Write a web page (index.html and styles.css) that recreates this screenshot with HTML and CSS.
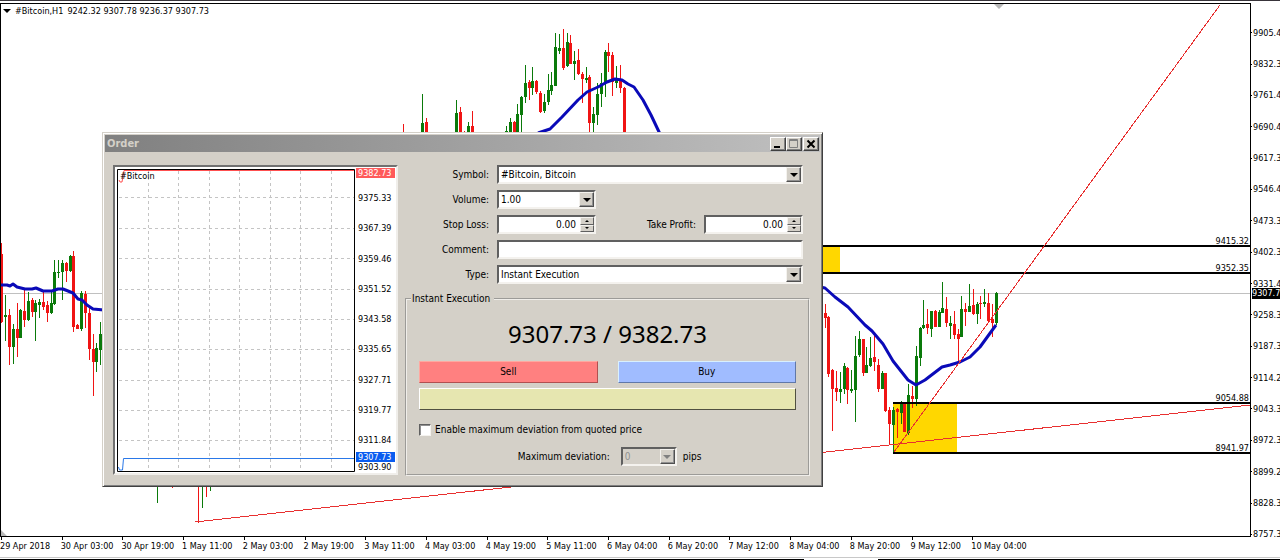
FILE: index.html
```html
<!DOCTYPE html>
<html lang="en">
<head>
  <meta charset="UTF-8">
  <meta name="viewport" content="width=device-width, initial-scale=1.0">
  <title>#Bitcoin,H1</title>
  <link rel="stylesheet" href="styles.css">
</head>
<body>
  <main class="terminal">
    <div class="chart">
      <div class="plot">
        <svg class="plot-svg" viewBox="1 4 1249 532">
          <rect class="zone" x="822" y="246" width="18" height="27"/>
          <rect class="zone" x="893" y="403" width="64" height="50"/>
          <path class="price-line" d="M1 293.5H1250"/>
          <g id="candles"></g>
          <path class="average" d="M1 285L7 285L10 286L13 284L17 287L25 289L32 289L36 288L43 291L52 291L58 289L63 289L68 291L73 293L78 299L82 300L87 305L93 309L104 310"/>
          <path class="average" d="M538 133L550 129L562 117L578 100L587 92L598 87L607 82L615 79L622 80L628 84L634 87L643 100L651 115L660 134"/>
          <path class="average" d="M820 287L825 288L835 297L848 307L865 325L872 331L883 344L893 361L908 380L916 385L925 380L942 367L950 365L960 362L970 357L980 347L996 325"/>
          <path class="level" d="M820 246H1250M820 273H1250M893 403H1250M893 453H1250"/>
          <path class="trend" d="M195 522L1250 405M894 452L1220 5"/>
          <path class="shift-mark" d="M994 4h10l-5 5zM1 530l6 6h-6z"/>
          <g class="level-text">
            <text x="1249" y="244">9415.32</text>
            <text x="1249" y="271">9352.35</text>
            <text x="1249" y="401">9054.88</text>
            <text x="1249" y="451">8941.97</text>
          </g>
        </svg>
        <div class="chart-title"><span class="caret"></span><span>#Bitcoin,H1</span><span>9242.32 9307.78 9236.37 9307.73</span></div>
      </div>
      <div class="price-axis">
        <span>9905.4</span>
        <span>9832.3</span>
        <span>9761.4</span>
        <span>9690.4</span>
        <span>9617.3</span>
        <span>9546.4</span>
        <span>9473.3</span>
        <span>9402.3</span>
        <span>9331.4</span>
        <span>9258.3</span>
        <span>9187.3</span>
        <span>9114.2</span>
        <span>9043.3</span>
        <span>8972.3</span>
        <span>8899.2</span>
        <span>8828.3</span>
        <span>8757.3</span>
        <b class="price-now">9307.7</b>
      </div>
      <div class="time-axis">
        <span>29 Apr 2018</span>
        <span>30 Apr 03:00</span>
        <span>30 Apr 19:00</span>
        <span>1 May 11:00</span>
        <span>2 May 03:00</span>
        <span>2 May 19:00</span>
        <span>3 May 11:00</span>
        <span>4 May 03:00</span>
        <span>4 May 19:00</span>
        <span>5 May 11:00</span>
        <span>6 May 04:00</span>
        <span>6 May 20:00</span>
        <span>7 May 12:00</span>
        <span>8 May 04:00</span>
        <span>8 May 20:00</span>
        <span>9 May 12:00</span>
        <span>10 May 04:00</span>
      </div>
    </div>
    <div class="tab-edge"><span></span></div>

    <form class="window" aria-labelledby="windowTitle">
      <div class="title-bar">
        <span id="windowTitle">Order</span>
        <div class="window-buttons">
          <button type="button" aria-label="Minimize"><svg viewBox="0 0 12 10"><path d="M2 8h6" stroke="#000" stroke-width="2"/></svg></button>
          <button type="button" aria-label="Maximize" disabled><svg viewBox="0 0 12 10"><path d="M1.500 .5h8v8h-8zM1.500 1.500h8" fill="none" stroke="#808080"/></svg></button>
          <button type="button" aria-label="Close" class="close"><svg viewBox="0 0 12 10"><path d="M2.500 1.500l7 7M9.500 1.500l-7 7" stroke="#000" stroke-width="2"/></svg></button>
        </div>
      </div>

      <div class="window-body">
        <div class="tick-chart">
          <svg class="tick-svg" viewBox="0 0 240 305">
            <path class="tick-grid" d="M32.500 3V303M62.500 3V303M93.500 3V303M123.500 3V303M154.500 3V303M184.500 3V303M215.500 3V303"/>
            <path class="tick-grid" d="M3 29.500H239M3 60.500H239M3 90.500H239M3 121.500H239M3 151.500H239M3 181.500H239M3 212.500H239M3 242.500H239M3 272.500H239"/>
            <path class="tick-frame" d="M1.500 1.500H238.500V303.500H1.500z"/>
            <path class="tick-ask" d="M3 12l1 2h2l2-11.500H238"/>
            <path class="tick-bid" d="M2.500 299l1 3h3l1-11.500H238"/>
            <text class="tick-name" x="4" y="11">#Bitcoin</text>
          </svg>
          <div class="tick-scale">
            <span class="tag ask">9382.73</span>
            <div class="tick-labels">
              <span>9375.33</span>
              <span>9367.39</span>
              <span>9359.46</span>
              <span>9351.52</span>
              <span>9343.58</span>
              <span>9335.65</span>
              <span>9327.71</span>
              <span>9319.77</span>
              <span>9311.84</span>
            </div>
            <span class="tag bid">9307.73</span>
            <span class="lowest">9303.90</span>
          </div>
        </div>

        <div class="order">
          <div class="fields">
            <label for="symbol">Symbol:</label>
            <div class="combo wide">
              <select id="symbol"><option>#Bitcoin, Bitcoin</option></select>
              <span class="arrow"></span>
            </div>

            <label for="volume">Volume:</label>
            <div class="combo">
              <select id="volume"><option>1.00</option></select>
              <span class="arrow"></span>
            </div>

            <label for="stopLoss">Stop Loss:</label>
            <div class="spin">
              <input type="text" id="stopLoss" value="0.00">
              <div class="spin-buttons">
                <button type="button" aria-label="Increase stop loss"></button>
                <button type="button" aria-label="Decrease stop loss" class="down"></button>
              </div>
            </div>
            <label for="takeProfit">Take Profit:</label>
            <div class="spin">
              <input type="text" id="takeProfit" value="0.00">
              <div class="spin-buttons">
                <button type="button" aria-label="Increase take profit"></button>
                <button type="button" aria-label="Decrease take profit" class="down"></button>
              </div>
            </div>

            <label for="comment">Comment:</label>
            <input type="text" id="comment" class="comment wide">

            <label for="type">Type:</label>
            <div class="combo wide">
              <select id="type"><option>Instant Execution</option></select>
              <span class="arrow"></span>
            </div>
          </div>

          <fieldset class="execution">
            <legend>Instant Execution</legend>
            <div class="quote">9307.73 / 9382.73</div>
            <div class="deal">
              <button type="button" class="sell">Sell</button>
              <button type="button" class="buy">Buy</button>
            </div>
            <div class="status-bar"></div>
            <div class="check-row">
              <input type="checkbox" id="deviation">
              <label for="deviation">Enable maximum deviation from quoted price</label>
            </div>
            <div class="deviation-row">
              <label for="maxDeviation">Maximum deviation:</label>
              <div class="combo off">
                <select id="maxDeviation" disabled><option>0</option></select>
                <span class="arrow"></span>
              </div>
              <span>pips</span>
            </div>
          </fieldset>
        </div>
      </div>
    </form>
  </main>

  <script src="chart.js"></script>
</body>
</html>
```

FILE: styles.css
```css
* {
    margin: 0;
    padding: 0;
    box-sizing: border-box;
}

body {
    background: #FFFFFF;
    color: #000000;
    font-family: 'DejaVu Sans Condensed', 'DejaVu Sans', sans-serif;
    font-size: 10px;
    line-height: 12px;
}

button, input, select {
    font: inherit;
    color: inherit;
}

.terminal {
    position: relative;
    min-height: 100vh;
    border-top: 1px solid #38343A;
    padding-top: 2px;
    display: flex;
    flex-direction: column;
    overflow: hidden;
}

/* chart */

.chart {
    display: grid;
    grid-template-columns: 1fr 29px;
    grid-template-rows: auto 20px;
    font-size: 9px;
    border-bottom: 1px solid #C8C8C8;
}

.plot {
    position: relative;
    border: 1px solid #000000;
}

.plot-svg {
    display: block;
    width: 100%;
}

.chart-title {
    position: absolute;
    top: 1px;
    left: 2px;
    display: flex;
    align-items: center;
    gap: 4px;
}

.caret {
    border: 4px solid transparent;
    border-top-color: #000000;
    border-bottom: none;
}

.zone {
    fill: #FFD700;
}

.price-line {
    stroke: #C0C0C0;
}

.level {
    stroke: #000000;
    stroke-width: 2;
}

.average {
    fill: none;
    stroke: #0A0AB8;
    stroke-width: 3;
    stroke-linejoin: round;
}

.trend {
    stroke: #E83030;
    fill: none;
    shape-rendering: crispEdges;
}

.shift-mark {
    fill: #B8B8B8;
}

.level-text {
    text-anchor: end;
}

.up {
    stroke: #0A7A0A;
}

.down-candle {
    stroke: #F01414;
}

.body {
    stroke-width: 3;
}

.price-axis {
    position: relative;
    display: flex;
    flex-direction: column;
    padding-top: 14px;
    margin-bottom: -13px;
    overflow: hidden;
}

.price-axis span {
    flex: 1;
    display: flex;
    align-items: center;
    gap: 1px;
}

.price-axis span::before {
    content: '';
    flex: none;
    width: 1px;
    height: 1px;
    background: #000000;
}

.price-now {
    position: absolute;
    top: 285px;
    left: 1px;
    right: 0;
    background: #000000;
    color: #FFFFFF;
    font-weight: normal;
    line-height: 11px;
}

.time-axis {
    display: flex;
    padding-right: 219px;
    white-space: nowrap;
}

.time-axis span {
    flex: 1 0 0;
    width: 0;
}

.time-axis span::before {
    content: '';
    display: block;
    width: 1px;
    height: 3px;
    margin-left: 1px;
    background: #000000;
}

.tab-edge {
    display: flex;
    padding-top: 1px;
}

.tab-edge::before,
.tab-edge::after {
    content: '';
    height: 1px;
    background: #000000;
    flex: 2 0 0;
}

.tab-edge::after {
    flex: 1 0 0;
}

.tab-edge span {
    width: 74px;
}

/* order window */

.window {
    position: absolute;
    left: 102px;
    top: 131px;
    width: 721px;
    padding: 2px;
    background: #D4D0C8;
    border: 1px solid;
    border-color: #D4D0C8 #404040 #404040 #D4D0C8;
    box-shadow: inset 1px 1px #FFFFFF, inset -1px -1px #808080;
}

.title-bar {
    display: flex;
    align-items: center;
    justify-content: space-between;
    height: 17px;
    padding: 0 1px 0 2px;
    background: linear-gradient(to right, #808080, #C0C0C0);
    color: #D4D0C8;
    font-size: 11px;
    font-weight: bold;
}

.window-buttons {
    display: flex;
}

.window-buttons button {
    width: 16px;
    height: 14px;
    padding: 1px;
    background: #D4D0C8;
    border: 1px solid;
    border-color: #FFFFFF #404040 #404040 #FFFFFF;
    box-shadow: inset -1px -1px #808080;
}

.window-buttons .close {
    margin-left: 1px;
}

.window-buttons svg {
    display: block;
    width: 12px;
    height: 10px;
}

.window-body {
    display: flex;
    gap: 7px;
    padding: 13px 10px 8px 8px;
}

.tick-chart {
    display: flex;
    width: 285px;
    height: 310px;
    padding: 1px;
    background: #FFFFFF;
    border: 2px solid;
    border-color: #707070 #F0EEEA #F0EEEA #707070;
    font-size: 9px;
}

.tick-svg {
    width: 240px;
    height: 305px;
}

.tick-grid {
    stroke: #C4C4C4;
    stroke-dasharray: 3 3;
}

.tick-frame {
    fill: none;
    stroke: #000000;
}

.tick-ask {
    fill: none;
    stroke: #FF5050;
}

.tick-bid {
    fill: none;
    stroke: #2A78E8;
}

.tick-scale {
    flex: 1;
    display: flex;
    flex-direction: column;
    line-height: 10px;
}

.tick-labels {
    flex: 1;
    display: flex;
    flex-direction: column;
    justify-content: space-between;
    padding: 15px 0 7px;
}

.tick-labels span,
.lowest {
    padding-left: 2px;
}

.tag {
    padding-left: 2px;
    color: #FFFFFF;
}

.ask {
    background: #FF5A5A;
}

.bid {
    background: #0A5CF0;
}

.order {
    flex: 1;
}

.fields {
    display: grid;
    grid-template-columns: 84px 99px 1fr 99px;
    grid-auto-rows: 19px;
    gap: 6px 8px;
    padding-right: 7px;
    align-items: center;
}

.fields label {
    grid-column: 1;
    text-align: right;
}

.fields label[for="takeProfit"] {
    grid-column: 3;
}

.wide {
    grid-column: 2 / 5;
}

.combo,
.spin,
.comment {
    width: 100%;
    height: 19px;
    background: #FFFFFF;
    border: 2px solid;
    border-color: #606060 #F4F2EE #F4F2EE #606060;
}

.combo {
    position: relative;
}

.combo select {
    display: block;
    width: 100%;
    height: 15px;
    padding-left: 2px;
    border: none;
    background: transparent;
    appearance: none;
    opacity: 1;
}

.arrow {
    position: absolute;
    top: 0;
    right: 0;
    width: 15px;
    height: 15px;
    display: flex;
    align-items: center;
    justify-content: center;
    background: #D4D0C8;
    border: 1px solid;
    border-color: #F4F2EE #505050 #505050 #F4F2EE;
    box-shadow: inset -1px -1px #909090;
    pointer-events: none;
}

.arrow::before {
    content: '';
    border: 4px solid transparent;
    border-top-color: #000000;
    border-bottom: none;
}

.spin {
    display: flex;
}

.spin input {
    flex: 1;
    min-width: 0;
    padding-right: 4px;
    border: none;
    background: transparent;
    text-align: right;
}

.spin-buttons {
    display: flex;
    flex-direction: column;
    width: 14px;
}

.spin-buttons button {
    flex: 1;
    display: flex;
    align-items: center;
    justify-content: center;
    background: #D4D0C8;
    border: 1px solid;
    border-color: #F4F2EE #606060 #606060 #F4F2EE;
}

.spin-buttons button::before {
    content: '';
    border: 2px solid transparent;
    border-bottom-color: #000000;
    border-top: none;
}

.spin-buttons .down::before {
    border: 2px solid transparent;
    border-top-color: #000000;
    border-bottom: none;
}

.execution {
    margin-top: 8px;
    padding: 0 12px 8px;
    border: 2px groove #F0EEEA;
}

.execution legend {
    margin-left: -8px;
    padding: 0 4px 0 1px;
    line-height: 14px;
}

.quote {
    margin: 14px 0 13px;
    font-family: 'Noto Sans', sans-serif;
    font-size: 24px;
    line-height: 28px;
    text-align: center;
}

.deal {
    display: flex;
    gap: 20px;
}

.deal button {
    flex: 1;
    height: 22px;
    border: 1px solid;
}

.deal .sell {
    background: #FF8080;
    border-color: #FFA8A0 #B05050 #B05050 #FFA8A0;
}

.deal .buy {
    background: #A0BCFF;
    border-color: #D8F0FF #6078A8 #6078A8 #D8F0FF;
}

.status-bar {
    height: 22px;
    margin: 5px 0 14px;
    background: #E6E6B0;
    border: 1px solid;
    border-color: #FFFFFF #505040 #505040 #FFFFFF;
}

.check-row {
    display: flex;
    align-items: center;
    gap: 4px;
}

.check-row input {
    width: 12px;
    height: 12px;
    background: #FFFFFF;
    border: 1px solid;
    border-color: #606060 #F4F2EE #F4F2EE #606060;
    box-shadow: inset 1px 1px #909090;
    appearance: none;
}

.deviation-row {
    display: flex;
    align-items: center;
    justify-content: center;
    gap: 6px;
    margin-top: 11px;
}

.deviation-row label {
    padding-left: 4px;
    padding-right: 5px;
}

.deviation-row .off {
    width: 56px;
    background: #D4D0C8;
    color: #909090;
}

.off .arrow::before {
    border-top-color: #808080;
}
```

FILE: chart.js
```js
// x, high, body top, body bottom, low, direction
const candles = [
  [1, 243, 254, 322, 323, 'd'], [5, 295, 315, 317, 341, 'u'], [9, 309, 315, 347, 365, 'd'],
  [13, 324, 329, 347, 364, 'u'], [17, 303, 329, 338, 357, 'd'], [20, 309, 310, 338, 338, 'u'],
  [24, 290, 311, 320, 327, 'd'], [28, 292, 301, 320, 321, 'u'], [32, 298, 300, 312, 317, 'd'],
  [35, 300, 303, 312, 341, 'u'], [39, 299, 302, 305, 318, 'u'], [43, 290, 302, 307, 310, 'd'],
  [47, 301, 305, 313, 322, 'd'], [51, 292, 303, 313, 314, 'u'], [54, 260, 272, 304, 305, 'u'],
  [58, 260, 272, 273, 278, 'u'], [62, 260, 263, 272, 300, 'u'], [66, 262, 263, 271, 282, 'd'],
  [70, 255, 256, 271, 272, 'u'], [73, 251, 256, 327, 332, 'd'], [77, 324, 325, 329, 329, 'd'],
  [81, 291, 293, 329, 331, 'u'], [85, 291, 294, 313, 328, 'd'], [89, 306, 313, 349, 360, 'd'],
  [93, 334, 349, 362, 396, 'd'], [96, 343, 348, 362, 372, 'u'], [100, 322, 334, 350, 365, 'u'],

  [157, 480, 480, 482, 503, 'u'], [172, 480, 480, 482, 488, 'd'], [198, 480, 480, 482, 523, 'd'],
  [202, 480, 480, 482, 508, 'u'], [206, 480, 480, 482, 497, 'd'], [210, 480, 480, 482, 491, 'u'],

  [403, 124, 135, 136, 136, 'd'], [422, 94, 123, 136, 136, 'u'], [426, 118, 122, 136, 136, 'd'],
  [456, 100, 113, 136, 136, 'u'], [460, 107, 112, 136, 136, 'd'], [464, 131, 135, 136, 136, 'd'],
  [468, 122, 126, 136, 136, 'u'], [472, 111, 126, 136, 136, 'd'], [506, 126, 131, 136, 136, 'u'],
  [510, 118, 122, 136, 136, 'u'], [514, 121, 122, 136, 136, 'd'], [517, 104, 114, 136, 136, 'u'],
  [521, 96, 97, 115, 136, 'u'], [525, 65, 83, 97, 103, 'u'], [529, 80, 82, 88, 100, 'd'],
  [532, 67, 81, 88, 95, 'u'], [536, 80, 81, 92, 94, 'd'], [540, 91, 93, 112, 113, 'd'],
  [544, 94, 102, 111, 113, 'u'], [548, 74, 90, 102, 105, 'u'], [551, 72, 85, 91, 95, 'u'],
  [555, 33, 47, 86, 86, 'u'], [559, 34, 48, 51, 54, 'u'], [563, 29, 48, 68, 70, 'd'],
  [567, 33, 42, 66, 67, 'u'], [570, 35, 43, 64, 64, 'd'], [574, 51, 61, 64, 80, 'u'],
  [578, 49, 60, 74, 75, 'd'], [582, 72, 74, 79, 103, 'd'], [586, 67, 78, 80, 83, 'u'],
  [589, 75, 77, 123, 136, 'd'], [593, 107, 114, 123, 136, 'u'], [597, 83, 94, 115, 125, 'u'],
  [601, 73, 83, 94, 107, 'u'], [605, 50, 52, 83, 97, 'u'], [608, 43, 52, 56, 72, 'd'],
  [612, 52, 55, 82, 96, 'd'], [616, 66, 79, 83, 88, 'u'], [620, 65, 80, 88, 93, 'd'],
  [624, 87, 88, 136, 136, 'd'],

  [825, 304, 313, 318, 328, 'd'], [828, 316, 317, 374, 377, 'd'], [832, 369, 370, 389, 431, 'd'],
  [836, 371, 388, 392, 401, 'd'], [840, 372, 389, 392, 403, 'u'], [844, 363, 366, 389, 394, 'u'],
  [847, 367, 368, 390, 404, 'd'], [851, 370, 389, 391, 393, 'u'], [855, 336, 356, 390, 422, 'u'],
  [859, 331, 339, 355, 357, 'u'], [863, 339, 339, 373, 376, 'd'], [866, 347, 365, 373, 373, 'u'],
  [870, 337, 358, 366, 367, 'u'], [874, 334, 357, 362, 371, 'd'], [878, 359, 365, 389, 392, 'd'],
  [882, 371, 373, 389, 389, 'u'], [885, 373, 373, 411, 412, 'd'], [889, 407, 410, 424, 444, 'd'],
  [893, 407, 410, 425, 454, 'u'], [897, 408, 409, 412, 438, 'd'], [901, 401, 404, 413, 424, 'u'],
  [904, 403, 404, 432, 432, 'd'], [908, 384, 395, 433, 435, 'u'], [912, 386, 396, 399, 408, 'd'],
  [916, 346, 356, 399, 406, 'u'], [920, 327, 328, 358, 366, 'u'], [923, 300, 325, 328, 329, 'u'],
  [927, 309, 324, 328, 334, 'd'], [931, 311, 311, 329, 337, 'u'], [935, 310, 311, 327, 327, 'd'],
  [939, 310, 312, 327, 327, 'u'], [942, 282, 308, 313, 313, 'u'], [946, 297, 309, 323, 327, 'd'],
  [950, 316, 323, 326, 339, 'u'], [954, 311, 324, 335, 339, 'd'], [958, 329, 334, 339, 363, 'd'],
  [961, 296, 309, 337, 337, 'u'], [965, 303, 309, 312, 326, 'd'], [969, 284, 306, 312, 312, 'u'],
  [973, 289, 305, 314, 315, 'd'], [977, 302, 304, 314, 324, 'u'], [980, 296, 303, 304, 319, 'd'],
  [984, 289, 302, 304, 307, 'u'], [988, 293, 303, 321, 322, 'd'], [992, 304, 319, 323, 337, 'd'],
  [996, 292, 293, 323, 325, 'u']
];

function addPath(className, d) {
  const path = document.createElementNS('http://www.w3.org/2000/svg', 'path');
  path.setAttribute('class', className);
  path.setAttribute('d', d);
  document.getElementById('candles').appendChild(path);
}

candles.forEach(function (candle) {
  const [left, high, top, bottom, low, direction] = candle;
  const x = left + 0.5;
  const color = direction === 'u' ? 'up' : 'down-candle';
  addPath(color, 'M' + x + ' ' + high + 'V' + low);
  addPath(color + ' body', 'M' + x + ' ' + top + 'V' + bottom);
});
```
